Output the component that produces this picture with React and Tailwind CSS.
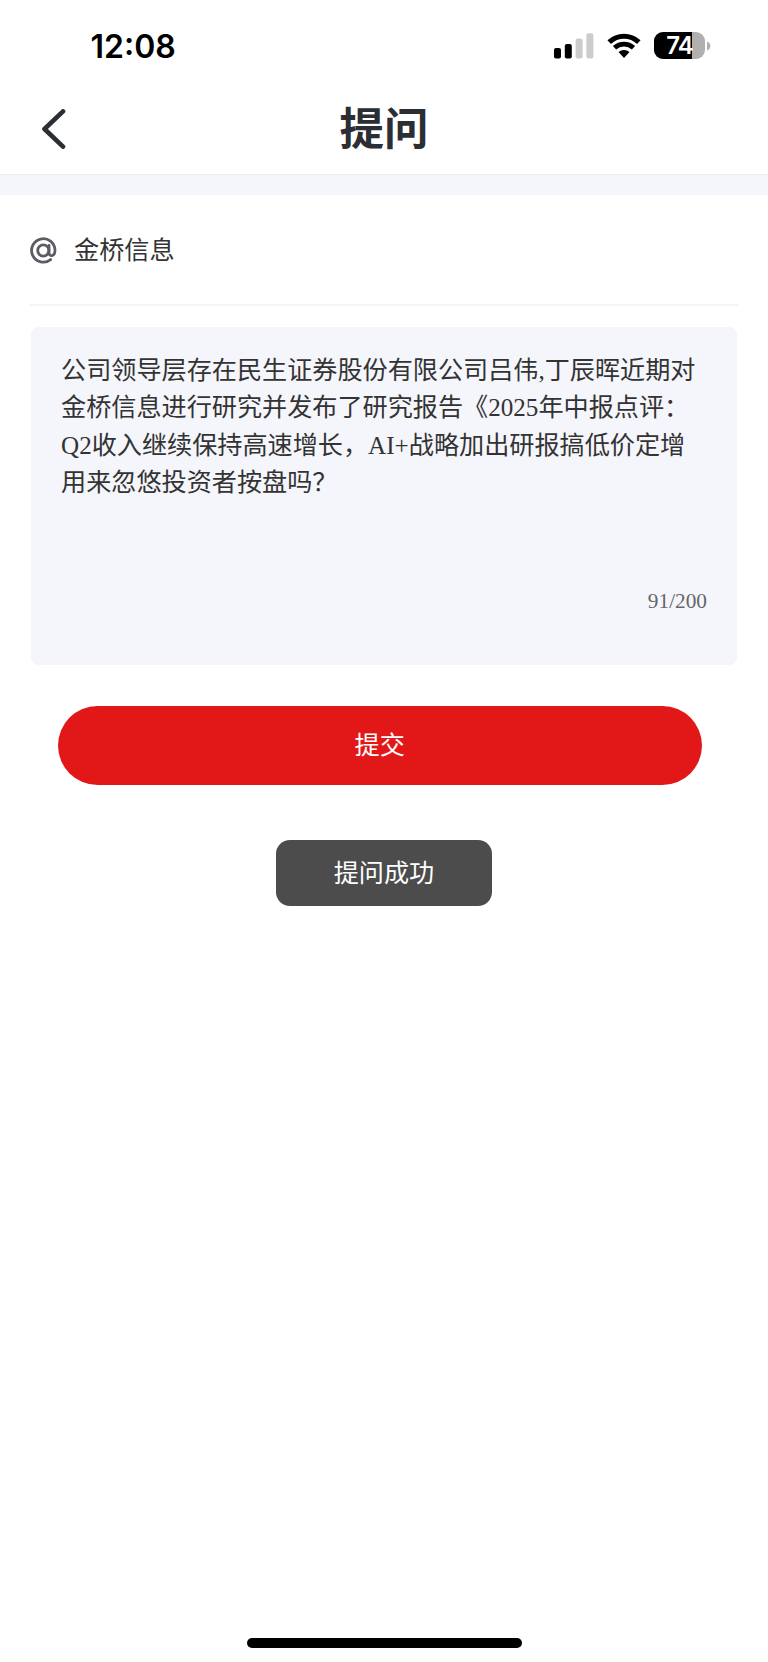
import React, { useState } from 'react';

const QUESTION_LINES = [
  '公司领导层存在民生证券股份有限公司吕伟,丁辰晖近期对',
  '金桥信息进行研究并发布了研究报告《2025年中报点评：',
  'Q2收入继续保持高速增长，AI+战略加出研报搞低价定增',
];

const SignalIcon = () => (
  <svg width="40" height="26" viewBox="0 0 40 26">
    <rect x="0" y="15" width="7" height="10.5" rx="2" fill="#000" />
    <rect x="10.8" y="11" width="7" height="14.5" rx="2" fill="#000" />
    <rect x="21.6" y="5.5" width="7" height="20" rx="2" fill="#ccc" />
    <rect x="32.4" y="0.3" width="7" height="25.2" rx="2" fill="#ccc" />
  </svg>
);

const WifiIcon = () => (
  <svg width="34" height="26" viewBox="0 0 34 26" fill="none" stroke="#000">
    <path d="M2.2 9.1A21.7 21.7 0 0 1 31.8 9.1" strokeWidth="5.2" />
    <path d="M7.5 14.8A13.9 13.9 0 0 1 26.5 14.8" strokeWidth="4.8" />
    <path d="M11.5 19.1A8 8 0 0 1 22.5 19.1L17 25Z" fill="#000" stroke="none" />
  </svg>
);

const Battery = ({ level }) => (
  <div className="flex items-center gap-0.5">
    <div className="relative flex h-[27px] w-[51px] items-center justify-center overflow-hidden rounded-[9px] bg-[#b0b0b0]">
      <div className="absolute inset-y-0 left-0 bg-black" style={{ width: `${level}%` }} />
      <span className="relative text-[24px] leading-none font-semibold tracking-[-1px] text-white">{level}</span>
    </div>
    <svg width="4" height="10" viewBox="0 0 4 10">
      <path d="M0 0.5C4.5 2 4.5 8 0 9.5Z" fill="#b0b0b0" />
    </svg>
  </div>
);

const StatusBar = () => (
  <div className="flex h-[92px] items-center justify-between pr-[57px] pl-[90.5px] font-[Inter,sans-serif]">
    <span className="pt-px text-[32px] leading-none font-semibold text-black">12:08</span>
    <div className="flex items-center pb-px">
      <SignalIcon />
      <div className="ml-[13px]"><WifiIcon /></div>
      <div className="ml-[13.5px]"><Battery level={74} /></div>
    </div>
  </div>
);

const AtIcon = () => (
  <svg width="27" height="27" viewBox="0 0 27 27" fill="none" stroke="#5b5d63" strokeWidth="2.8" strokeLinecap="round">
    <circle cx="13.3" cy="13.5" r="5.6" />
    <path d="M19 8.3V15.5C19 20.3 25 19.8 25 13.3A11.7 11.7 0 1 0 20.6 22.6" />
  </svg>
);

const App = () => {
  const [submitted, setSubmitted] = useState(true);

  return (
    <div className="flex min-h-[1662px] w-[768px] flex-col bg-white font-['Liberation_Serif','Noto_Sans_CJK_SC',serif]">
      <StatusBar />

      <header className="grid h-[82px] grid-cols-3 items-center px-10 pb-[8px] text-[#2b2e33]">
        <button>
          <svg width="28" height="40" viewBox="0 0 28 40" fill="none" stroke="currentColor" strokeWidth="4.6" strokeLinecap="round" strokeLinejoin="round">
            <path d="M23 2.4L4.5 20L23 37.6" />
          </svg>
        </button>
        <h1 className="pb-[5px] text-center font-['Noto_Sans_CJK_SC',sans-serif] text-[44.5px] leading-none font-bold">提问</h1>
      </header>
      <div className="h-[21px] border-t border-[#ececf2] bg-[#f5f6fb]" />

      <main className="flex flex-col text-[25.13px] text-[#333]">
        <div className="mx-[29px] flex h-[111px] items-center gap-[17px] border-b-2 border-[#f5f5f5]">
          <div className="pt-[2px] pl-px"><AtIcon /></div>
          <span className="pb-[2px] font-['Noto_Sans_CJK_SC',sans-serif] leading-none">金桥信息</span>
        </div>

        <div className="mx-[31px] mt-[21px] flex h-[338px] flex-col rounded-lg bg-[#f5f6fb] px-[30px] pt-[24.5px]">
          <div className="h-[229.5px] leading-[37.6px] whitespace-nowrap">
            {QUESTION_LINES.map((line) => (
              <p key={line}>{line}</p>
            ))}
            <p>用来忽悠投资者按盘吗？</p>
          </div>
          <div className="text-right text-[21.3px] leading-[40px] text-[#666]">91/200</div>
        </div>

        <button
          onClick={() => setSubmitted(true)}
          className="mt-[40.5px] ml-[57.5px] h-[79px] w-[644.5px] rounded-full bg-[#e21818] pt-px text-white"
        >
          提交
        </button>

        {submitted && (
          <div
            onClick={() => setSubmitted(false)}
            className="mx-auto mt-[55px] flex h-[66.5px] w-[216px] items-center justify-center rounded-[14px] bg-[#4c4c4c] pt-[2px] text-white"
          >
            提问成功
          </div>
        )}
      </main>

      <div className="mx-auto mt-auto mb-[14.5px] h-[10px] w-[275px] rounded-full bg-black" />
    </div>
  );
};

export default App;
